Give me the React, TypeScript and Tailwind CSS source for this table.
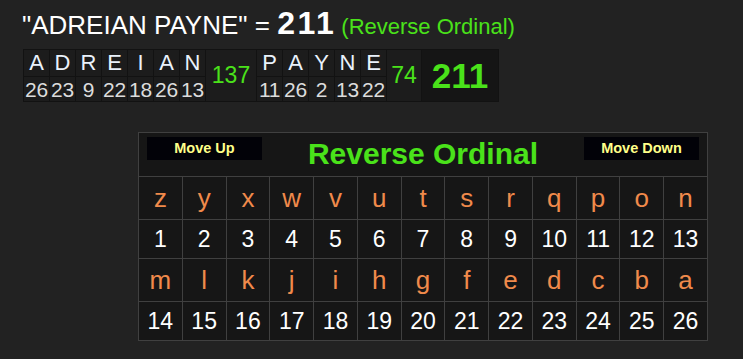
import React from 'react';

const font = { fontFamily: '"Liberation Sans", Arial, sans-serif' };

const words = [
  { letters: ['A', 'D', 'R', 'E', 'I', 'A', 'N'], values: [26, 23, 9, 22, 18, 26, 13], sum: 137, sumWidth: 'w-[50px]' },
  { letters: ['P', 'A', 'Y', 'N', 'E'], values: [11, 26, 2, 13, 22], sum: 74, sumWidth: 'w-[34px]' },
];

const topRow = 'zyxwvutsrqpon'.split('');
const bottomRow = 'mlkjihgfedcba'.split('');

function LetterColumn({ letter, value }: { letter: string; value: number }) {
  return (
    <div className="flex w-[25px] flex-col gap-px">
      <div className="flex h-[26px] items-center justify-center bg-[#1c1c1c] text-[22px] leading-none text-[#eaf2fb]">
        {letter}
      </div>
      <div className="flex h-[24px] items-center justify-center bg-[#1c1c1c] text-[21px] leading-none tracking-[-0.3px] text-[#dcdcdc]">
        {value}
      </div>
    </div>
  );
}

function MoveButton({ label }: { label: string }) {
  return (
    <button className="flex h-[23px] w-[115px] items-center justify-center bg-[#020208] text-[14.5px] font-bold leading-none text-[#ffff88]">
      {label}
    </button>
  );
}

export default function App() {
  return (
    <div className="min-h-screen bg-[#222222] pb-4" style={font}>
      {/* Title */}
      <div className="flex items-baseline pl-[22px] pt-[7px] leading-none">
        <span className="text-[26px] text-white">"ADREIAN PAYNE" =&nbsp;</span>
        <span className="text-[32px] font-bold tracking-[2.5px] text-white">211</span>
        <span className="ml-[5px] text-[22px] text-[#4ae21a]">(Reverse Ordinal)</span>
      </div>

      {/* Breakdown */}
      <div className="ml-[23px] mt-[10px] inline-flex gap-px bg-[#121212] p-px">
        {words.map((w, wi) => (
          <React.Fragment key={wi}>
            {w.letters.map((l, i) => (
              <LetterColumn key={i} letter={l} value={w.values[i]} />
            ))}
            <div
              className={`flex ${w.sumWidth} items-center justify-center bg-[#1c1c1c] text-[23px] leading-none text-[#4ae21a]`}
            >
              {w.sum}
            </div>
          </React.Fragment>
        ))}
        <div className="flex w-[76px] items-center justify-center bg-[#151515] text-[35px] font-bold leading-none text-[#4ae21a]">
          211
        </div>
      </div>

      {/* Cipher chart */}
      <div className="ml-[138px] mt-[30px] grid w-[570px] grid-cols-[repeat(13,minmax(0,1fr))] gap-px border border-[#404040] bg-[#404040]">
        <div className="col-span-13 flex h-[43px] items-start justify-between bg-[#161616] px-[8px] pt-[4px]">
          <MoveButton label="Move Up" />
          <span className="mt-[2px] text-[30px] font-bold leading-none text-[#4ae21a]">Reverse Ordinal</span>
          <MoveButton label="Move Down" />
        </div>
        {topRow.map((l) => (
          <div key={l} className="flex h-[42px] items-center justify-center bg-[#161616] text-[26px] leading-none text-[#f08a4b]">
            {l}
          </div>
        ))}
        {topRow.map((_, i) => (
          <div key={i} className="flex h-[38px] items-center justify-center bg-[#161616] text-[23px] leading-none text-white">
            {i + 1}
          </div>
        ))}
        {bottomRow.map((l) => (
          <div key={l} className="flex h-[42px] items-center justify-center bg-[#161616] text-[26px] leading-none text-[#f08a4b]">
            {l}
          </div>
        ))}
        {bottomRow.map((_, i) => (
          <div key={i} className="flex h-[38px] items-center justify-center bg-[#161616] text-[23px] leading-none text-white">
            {i + 14}
          </div>
        ))}
      </div>
    </div>
  );
}
